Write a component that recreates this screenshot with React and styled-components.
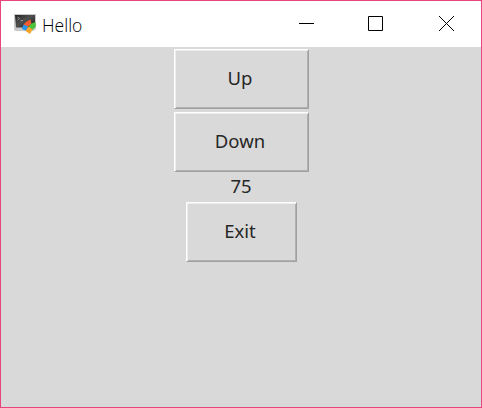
import React from "react";
import styled, { createGlobalStyle } from "styled-components";

const GlobalStyle = createGlobalStyle`
  * { box-sizing: border-box; }
  body { margin: 0; overflow: hidden; }
`;

const Window = styled.main`
  width: 482px;
  height: 408px;
  border: 1px solid #e8457f;
  background: #d9d9d9;
  display: flex;
  flex-direction: column;
`;

const TitleBar = styled.header`
  height: 46px;
  flex: none;
  background: #fff;
  display: flex;
  align-items: center;
  padding-left: 12px;
`;

const AppIcon = styled.svg`
  width: 24px;
  height: 24px;
  flex: none;
`;

const Title = styled.h1`
  margin: 2px auto 0 5px;
  font: 350 17.5px/24px "Open Sans", sans-serif;
  color: #000;
`;

const Control = styled.button`
  width: 70px;
  height: 46px;
  padding: 0;
  border: 0;
  background: transparent;
  display: grid;
  place-items: center;

  svg {
    display: block;
    width: 16px;
    height: 16px;
    fill: none;
    stroke: #000;
    overflow: visible;
  }
`;

const Controls = styled.div`
  display: flex;
`;

const Content = styled.section`
  display: flex;
  flex-direction: column;
  align-items: center;
  padding-top: 2px;
  font: 400 18.5px/24px "Noto Sans", sans-serif;
  color: #262626;
`;

const PushButton = styled.button`
  width: ${({ $width }) => $width}px;
  height: 60px;
  margin-bottom: 3px;
  padding: 0 2px 3px 0;
  font: inherit;
  color: inherit;
  background: #d9d9d9;
  border: 1px solid;
  border-color: #fff #a0a0a0 #a0a0a0 #fff;
  box-shadow: inset 1px 1px #ededed, inset -1px -1px #b0b0b0;
`;

const Value = styled.output`
  height: 27px;
  line-height: 22px;
`;

function TerminalIcon() {
  return (
    <AppIcon viewBox="0 0 24 24" aria-hidden="true">
      <defs>
        <linearGradient id="screen" x1="0" y1="0" x2="1" y2="1">
          <stop offset="0" stopColor="#222" />
          <stop offset="0.45" stopColor="#505050" />
          <stop offset="1" stopColor="#191919" />
        </linearGradient>
        <filter id="soft" x="-10%" y="-10%" width="120%" height="120%">
          <feGaussianBlur stdDeviation="0.45" />
        </filter>
      </defs>
      <g filter="url(#soft)">
        <path d="M1 2H23V17L20 19H2L1 17Z" fill="#c9c9c9" />
        <path d="M2 3H22V15.5H3Z" fill="url(#screen)" />
        <path d="M4.5 5L6.5 6.5L4.5 8M7.5 8.5H10" fill="none" stroke="#aaa" strokeWidth="0.8" />
        <path d="M13.5 9.5L17.5 7.5L18.5 12L14.5 15L10.5 12.5Z" fill="#f45a2d" />
        <path d="M18.5 11.5L22.5 10L23 14L19 18.5L15.5 14.5Z" fill="#4bc43b" />
        <path d="M10.5 12.5L15 14.5L13.5 19L9 17Z" fill="#2896ed" />
        <path d="M15.5 14.5L19.5 17.5L17 22L12.5 19Z" fill="#f7a52b" />
      </g>
    </AppIcon>
  );
}

export default function App() {
  return (
    <>
      <GlobalStyle />
      <Window>
        <TitleBar>
          <TerminalIcon />
          <Title>Hello</Title>
          <Controls>
            <Control aria-label="Minimize">
              <svg viewBox="0 0 16 16"><path d="M1 7.5H16" /></svg>
            </Control>
            <Control aria-label="Maximize">
              <svg viewBox="0 0 16 16"><path d="M.5 .5H14.5V14.5H.5Z" /></svg>
            </Control>
            <Control aria-label="Close">
              <svg viewBox="0 0 16 16"><path d="M1 0L16 15M16 0L1 15" /></svg>
            </Control>
          </Controls>
        </TitleBar>
        <Content>
          <PushButton $width={135}>Up</PushButton>
          <PushButton $width={135}>Down</PushButton>
          <Value>75</Value>
          <PushButton $width={111}>Exit</PushButton>
        </Content>
      </Window>
    </>
  );
}
